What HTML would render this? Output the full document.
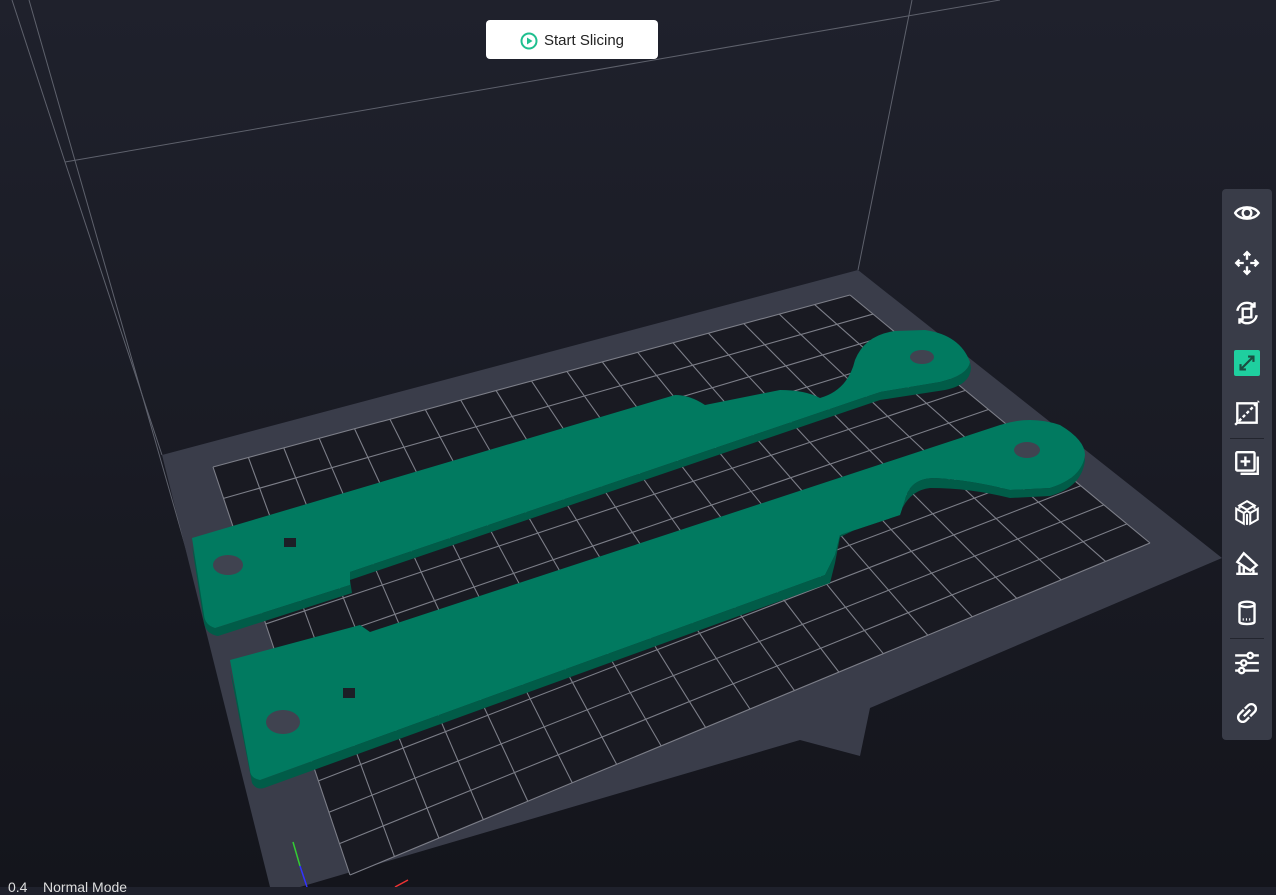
<!DOCTYPE html>
<html><head><meta charset="utf-8"><style>
html,body{margin:0;padding:0;width:1276px;height:887px;overflow:hidden;background:linear-gradient(#1f212c,#14151c);font-family:"Liberation Sans",sans-serif}
#scene{position:absolute;left:0;top:0}
.btn{position:absolute;left:486px;top:20px;width:172px;height:39px;background:#fff;border-radius:4px;display:flex;align-items:center;justify-content:center;font-size:15px;color:#222;padding-top:2px;box-sizing:border-box}
.btn svg{margin-right:6px}
.tb{position:absolute;left:1222px;top:189px;width:50px;height:551px;background:#393c48;border-radius:4px}
.ic{position:absolute;left:11px;width:28px;height:28px}
.sep{position:absolute;left:8px;width:34px;height:1px;background:#23252e}
.bl{position:absolute;left:8px;top:879px;color:#ddd;font-size:14px;white-space:pre}
</style></head><body>
<svg id="scene" width="1276" height="887" viewBox="0 0 1276 887">
<g stroke="#5e616c" stroke-width="1" fill="none">
<line x1="65" y1="162" x2="1000" y2="0"/>
<line x1="858" y1="270" x2="912" y2="0"/>
<line x1="12" y1="0" x2="65" y2="162"/>
<line x1="65" y1="162" x2="162" y2="455"/>
<line x1="29" y1="0" x2="283" y2="887"/>
</g>
<polygon points="162,455 858,270 1222,558 870,708 860,756 800,740 300,887 270,887" fill="#3a3d4a"/>
<polygon points="213,467 850,295 1150,543 350,875" fill="#191a22"/>
<g id="grid" stroke="#7c7e88" stroke-width="1.1"></g>
<g>
<path d="M192,546 L204,623 Q206,634 218,636 L352,593 L350,580 L880,400 L945,390 Q970,385 971,368 L970,362 Q968,375 940,382 L880,392 L350,572 L350,585 L215,628 Z" fill="#015c48"/>
<path d="M192,538 L675,395 Q690,395 705,405 L780,390 Q805,390 820,398 Q848,390 855,360 Q865,335 895,331 L925,330 Q960,335 970,362 Q968,375 940,382 L880,392 L350,572 L350,585 L215,628 Q205,625 204,615 Z" fill="#017a60"/>
<ellipse cx="228" cy="565" rx="15" ry="10" fill="#404350"/>
<ellipse cx="922" cy="357" rx="12" ry="7" fill="#404350"/>
<rect x="284" y="538" width="12" height="9" fill="#1c1e26"/>
<path d="M230,670 L252,783 Q256,790 264,788 L830,583 L835,563 L840,537 L903,507 Q912,490 930,488 Q970,488 1010,498 L1050,496 Q1082,487 1085,460 L1084,455 Q1082,478 1050,488 L1010,490 Q970,480 935,478 Q910,478 905,500 L900,515 L840,535 L835,555 L825,575 L260,780 Z" fill="#015c48"/>
<path d="M230,660 L360,625 L370,632 L1000,425 Q1030,415 1060,425 Q1085,440 1085,455 Q1082,478 1050,488 L1010,490 Q970,480 935,478 Q910,478 905,500 L900,515 L840,535 L835,555 L825,575 L260,780 Q250,778 250,770 Z" fill="#017a60"/>
<ellipse cx="283" cy="722" rx="17" ry="12" fill="#404350"/>
<ellipse cx="1027" cy="450" rx="13" ry="8" fill="#404350"/>
<rect x="343" y="688" width="12" height="10" fill="#1c1e26"/>
</g>
<g stroke-width="1.5"><line x1="293" y1="842" x2="300" y2="866" stroke="#3c3"/><line x1="300" y1="866" x2="307" y2="887" stroke="#33f"/><line x1="395" y1="887" x2="408" y2="880" stroke="#e33"/></g>
</svg>
<div class="btn"><svg width="18" height="18" viewBox="0 0 18 18"><circle cx="9" cy="9" r="7.5" fill="none" stroke="#1fbf8f" stroke-width="2"/><path d="M7 5.5L12.5 9L7 12.5Z" fill="#1fbf8f"/></svg>Start Slicing</div>
<div class="tb">
<svg class="ic" style="top:10px" viewBox="0 0 26 26" fill="none" stroke="#fff" stroke-width="2.2"><path d="M2 13C6 6 20 6 24 13C20 20 6 20 2 13Z"/><circle cx="13" cy="13" r="4"/></svg>
<svg class="ic" style="top:60px" viewBox="0 0 26 26" fill="none" stroke="#fff" stroke-width="2.2"><path d="M13 4V10M13 16V22M4 13H10M16 13H22M10 6L13 3L16 6M10 20L13 23L16 20M6 10L3 13L6 16M20 10L23 13L20 16"/></svg>
<svg class="ic" style="top:110px" viewBox="0 0 26 26" fill="none" stroke="#fff" stroke-width="2.2"><rect x="9" y="9" width="8" height="8"/><path d="M4 11A9 9 0 0 1 20 7M20 3V7H16M22 15A9 9 0 0 1 6 19M6 23V19H10"/></svg>
<div style="position:absolute;left:12px;top:161px;width:26px;height:26px;background:#1fcf9f;border-radius:2px"></div>
<svg class="ic" style="top:160px" viewBox="0 0 26 26" fill="none" stroke="#1a4d40" stroke-width="2"><path d="M7 19L19 7M14 7H19V12M7 14V19H12"/></svg>
<svg class="ic" style="top:210px" viewBox="0 0 26 26" fill="none" stroke="#fff" stroke-width="2.2"><path d="M4 22V4H22V22H4" /><path d="M2 24L24 2" stroke-dasharray="3 2"/></svg>
<div class="sep" style="top:249px"></div>
<svg class="ic" style="top:260px" viewBox="0 0 26 26" fill="none" stroke="#fff" stroke-width="2.2"><rect x="3" y="3" width="17" height="17" rx="1"/><path d="M11.5 7V16M7 11.5H16M7 23H23V7"/></svg>
<svg class="ic" style="top:310px" viewBox="0 0 26 26" fill="none" stroke="#fff" stroke-width="1.9"><path d="M13 2L20 6L13 10L6 6Z M6 6V9M20 6V9M3 9L10 13V23L3 19Z M23 9L16 13V23L23 19Z M10 13L13 11L16 13M13 14V24"/></svg>
<svg class="ic" style="top:360px" viewBox="0 0 26 26" fill="none" stroke="#fff" stroke-width="2.2"><path d="M4 12L10 4L22 15L16 20Z M3 23H23M6 15V23M10 17V23M19 19V23"/></svg>
<svg class="ic" style="top:410px" viewBox="0 0 26 26" fill="none" stroke="#fff" stroke-width="2.2"><ellipse cx="13" cy="5" rx="7" ry="2.5"/><path d="M6 5V21C6 24 20 24 20 21V5"/><path d="M9 19H17" stroke-dasharray="1 2"/></svg>
<div class="sep" style="top:449px"></div>
<svg class="ic" style="top:460px" viewBox="0 0 26 26" fill="none" stroke="#fff" stroke-width="2.2"><path d="M2 6H24M2 13H24M2 20H24"/><circle cx="16" cy="6" r="2.5" fill="#393c48"/><circle cx="10" cy="13" r="2.5" fill="#393c48"/><circle cx="8" cy="20" r="2.5" fill="#393c48"/></svg>
<svg class="ic" style="top:510px" viewBox="0 0 26 26" fill="none" stroke="#fff" stroke-width="2.2"><path d="M11 9L14 6A4 4 0 0 1 20 12L16 16M10 10L6 14A4 4 0 0 0 12 20L15 17M10 16L16 10"/></svg>
</div>
<div class="bl">0.4    Normal Mode</div>
<script>
var g=document.getElementById('grid'),TL=[213,467],TR=[850,295],BR=[1150,543],BL=[350,875];
function L(a,b,t){return [a[0]+(b[0]-a[0])*t,a[1]+(b[1]-a[1])*t]}
var s='',N=18,M=13;
for(var i=0;i<=N;i++){var p=L(TL,TR,i/N),q=L(BL,BR,i/N);s+='<line x1="'+p[0]+'" y1="'+p[1]+'" x2="'+q[0]+'" y2="'+q[1]+'"/>';}
for(var j=0;j<=M;j++){var p=L(TL,BL,j/M),q=L(TR,BR,j/M);s+='<line x1="'+p[0]+'" y1="'+p[1]+'" x2="'+q[0]+'" y2="'+q[1]+'"/>';}
g.innerHTML=s;
</script>
</body></html>
